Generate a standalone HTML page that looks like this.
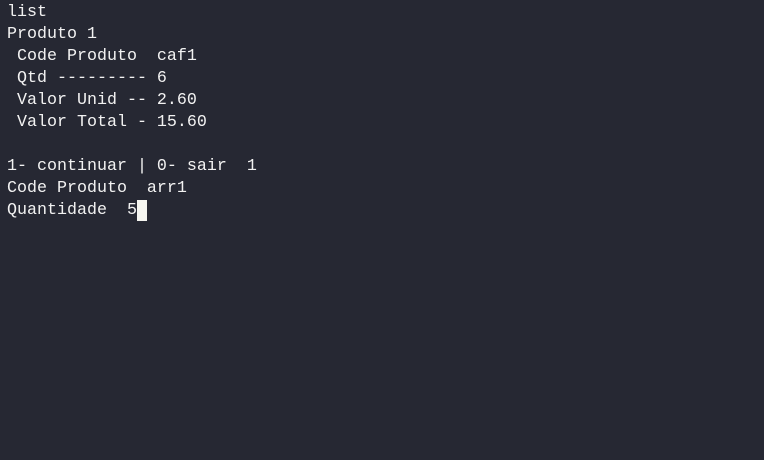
<!DOCTYPE html>
<html><head><style>
html,body{margin:0;padding:0;width:764px;height:460px;background:#262833;overflow:hidden}
pre{margin:0;padding:2px 0 0 7px;font-family:"Liberation Mono",monospace;font-size:16.67px;line-height:22px;color:#f2f2f2}
.c{display:inline-block;width:10px;height:21px;background:#f5f5f0;vertical-align:top;margin-top:0px}
</style></head><body><pre>list
Produto 1
 Code Produto  caf1
 Qtd --------- 6
 Valor Unid -- 2.60
 Valor Total - 15.60

1- continuar | 0- sair  1
Code Produto  arr1
Quantidade  5<span class="c"></span></pre></body></html>
